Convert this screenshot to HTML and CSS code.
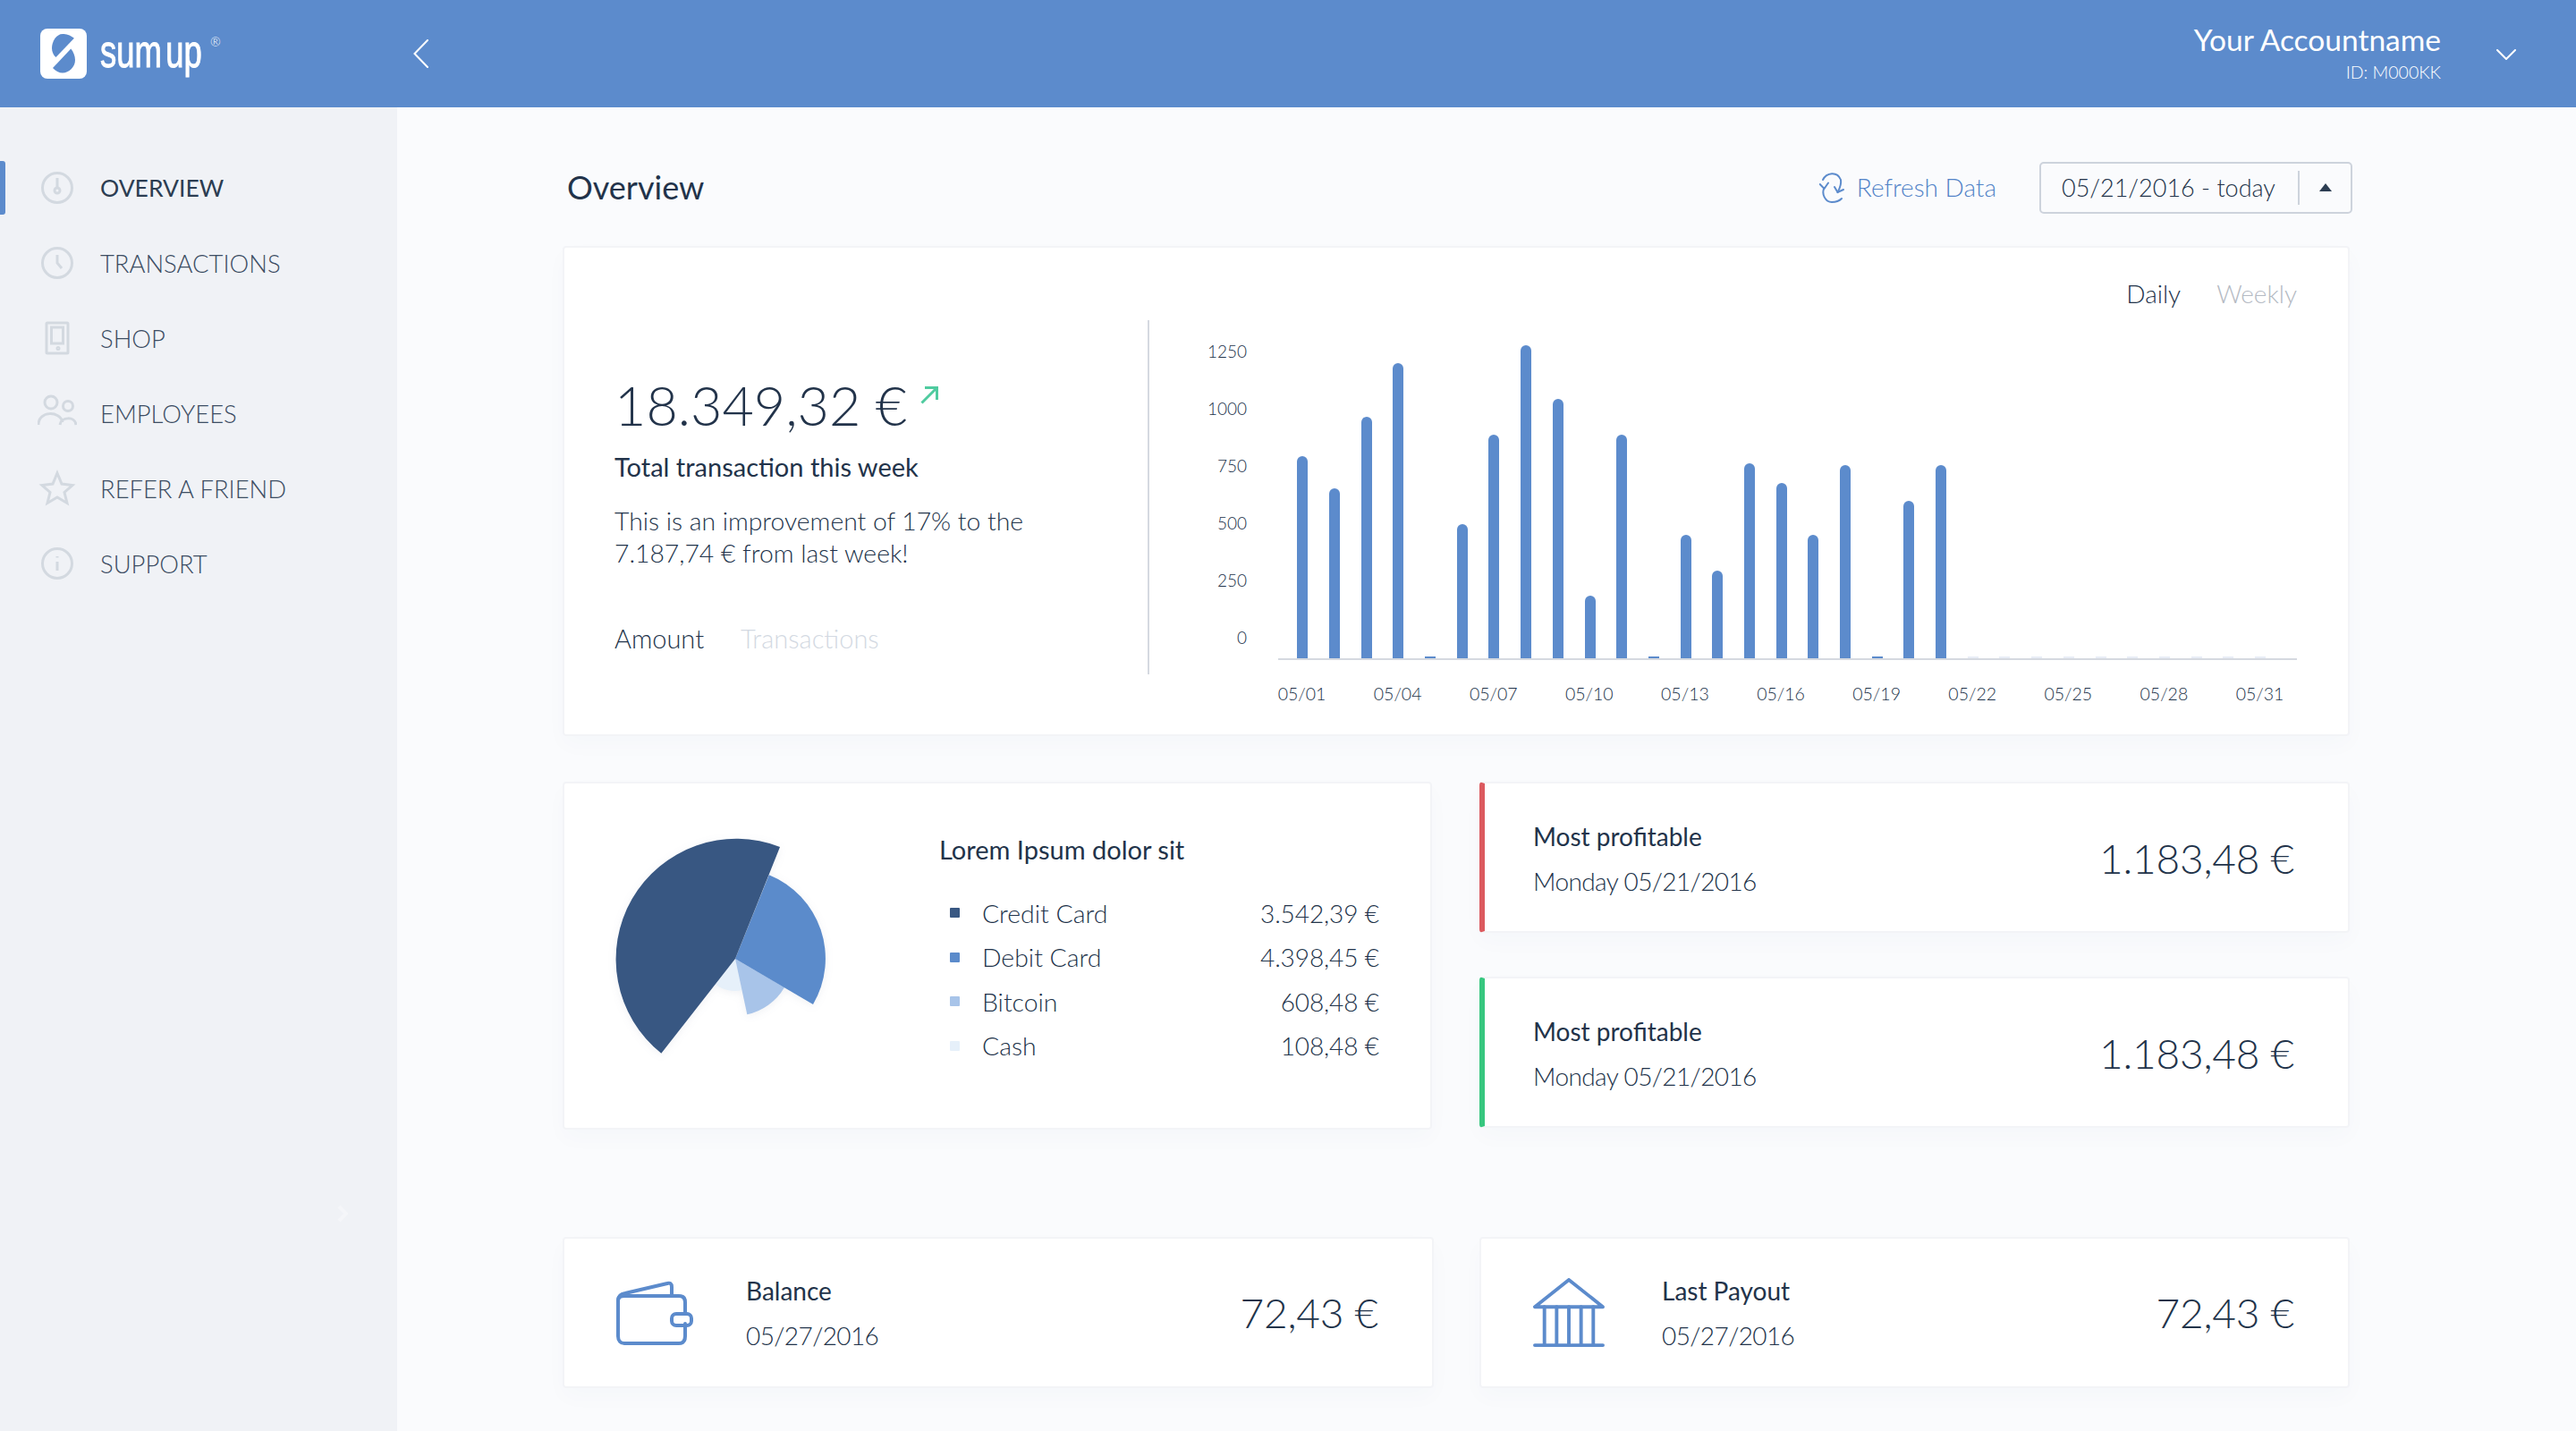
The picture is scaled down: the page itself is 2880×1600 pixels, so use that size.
FILE: index.html
```html
<!DOCTYPE html>
<html lang="en">
<head>
  <meta charset="UTF-8" />
  <title>SumUp Overview</title>
  <link rel="stylesheet" href="styles.css">
</head>
<body>

  <header class="topbar">
    <div class="brand">
      <svg class="brand-mark" viewBox="0 0 52 56">
        <rect width="52" height="56" rx="8" fill="#fff"/>
        <path fill="#5c8bcc" d="M37.9 10.700C33 7 29 6 25 6C18 6 13 14 13 22C13 26 15 30 17.500 32Z"/>
        <path fill="#5c8bcc" d="M34.300 22.500C37 26 39 31 39 35C39 43 32 49.500 25 49.500C21 49.500 17 47.500 14 44Z"/>
      </svg>
      <span class="brand-name">sum up</span>
      <span class="brand-reg">®</span>
    </div>
    <svg class="collapse" viewBox="0 0 17 32"><path d="M16 1L1.500 16L16 31"/></svg>
    <div class="account">
      <div class="account-name">Your Accountname</div>
      <div class="account-id">ID: M000KK</div>
    </div>
    <svg class="account-caret" viewBox="0 0 22 12"><path d="M1 1L11 11L21 1"/></svg>
  </header>

  <div class="layout">
    <aside class="sidebar">
      <nav>
        <a class="nav-item active">
          <svg class="nav-icon" viewBox="0 0 44 44"><circle cx="22" cy="22" r="16.500"/><path d="M22 11V22"/><circle cx="22" cy="25" r="3"/></svg>
          OVERVIEW
        </a>
        <a class="nav-item">
          <svg class="nav-icon" viewBox="0 0 44 44"><circle cx="22" cy="22" r="16.500"/><path d="M22 13V22L27 28"/></svg>
          TRANSACTIONS
        </a>
        <a class="nav-item">
          <svg class="nav-icon" viewBox="0 0 44 44"><rect x="10" y="5" width="24" height="34" rx="1"/><rect x="15.500" y="10" width="13" height="18"/><circle cx="23" cy="33.500" r="1" /></svg>
          SHOP
        </a>
        <a class="nav-item">
          <svg class="nav-icon" viewBox="0 0 44 44"><circle cx="15" cy="10" r="7"/><circle cx="34" cy="14" r="5.500"/><path d="M1 35C1 19 25 19 28 32"/><path d="M25 35C26 26 42 25 43 35"/></svg>
          EMPLOYEES
        </a>
        <a class="nav-item">
          <svg class="nav-icon" viewBox="0 0 44 44"><path d="M22 5L27 17L39 18.500L30 26.500L33 38.500L22 32L11 38.500L14 26.500L5 18.500L17 17Z"/></svg>
          REFER A FRIEND
        </a>
        <a class="nav-item">
          <svg class="nav-icon" viewBox="0 0 44 44"><circle cx="22" cy="22" r="16.500"/><path d="M22 20V30"/><path d="M22 14V15.500"/></svg>
          SUPPORT
        </a>
      </nav>
      <svg class="sidebar-toggle" viewBox="0 0 12 20"><path d="M2 2L10 10L2 18"/></svg>
    </aside>

    <main class="content">
      <div class="toolbar">
        <h1 class="page-title">Overview</h1>
        <a class="refresh">
          <svg class="refresh-icon" viewBox="12 12 28 36">
            <path d="M16 22C20 14 32 12 36 22C37 28 34 33 32.500 36"/><path d="M29 30L32.500 36L39 33"/>
            <path d="M17.500 31C14 38 19 47 26 47C30 47 34 46 37 43"/><path d="M12.700 27L17.500 32L22 25.500"/>
          </svg>
          Refresh Data
        </a>
        <div class="date-select">
          <span class="date-value">05/21/2016 - today</span>
          <span class="date-arrow"></span>
        </div>
      </div>

      <section class="card summary">
        <div class="summary-text">
          <div class="total">
            <span>18.349,32 €</span>
            <svg class="trend" viewBox="0 0 20 20"><path d="M1.500 18.500L18 2"/><path d="M5 1.500H18.500V15"/></svg>
          </div>
          <div class="total-label">Total transaction this week</div>
          <p class="total-note">This is an improvement of 17% to the<br>7.187,74 € from last week!</p>
          <div class="tabs">
            <span>Amount</span>
            <span class="tab-off">Transactions</span>
          </div>
        </div>

        <div class="summary-chart">
          <div class="period">
            <span>Daily</span>
            <span class="period-off">Weekly</span>
          </div>
          <div class="chart">
            <div class="y-axis">
              <span>1250</span><span>1000</span><span>750</span><span>500</span><span>250</span><span>0</span>
            </div>
            <div class="plot">
              <div class="slot"><i class="bar" style="height:226px"></i></div>
              <div class="slot"><i class="bar" style="height:190px"></i></div>
              <div class="slot"><i class="bar" style="height:270px"></i></div>
              <div class="slot"><i class="bar" style="height:330px"></i></div>
              <div class="slot"><i class="bar tiny" style="height:2px"></i></div>
              <div class="slot"><i class="bar" style="height:150px"></i></div>
              <div class="slot"><i class="bar" style="height:250px"></i></div>
              <div class="slot"><i class="bar" style="height:350px"></i></div>
              <div class="slot"><i class="bar" style="height:290px"></i></div>
              <div class="slot"><i class="bar" style="height:70px"></i></div>
              <div class="slot"><i class="bar" style="height:250px"></i></div>
              <div class="slot"><i class="bar tiny" style="height:2px"></i></div>
              <div class="slot"><i class="bar" style="height:138px"></i></div>
              <div class="slot"><i class="bar" style="height:98px"></i></div>
              <div class="slot"><i class="bar" style="height:218px"></i></div>
              <div class="slot"><i class="bar" style="height:196px"></i></div>
              <div class="slot"><i class="bar" style="height:138px"></i></div>
              <div class="slot"><i class="bar" style="height:216px"></i></div>
              <div class="slot"><i class="bar tiny" style="height:2px"></i></div>
              <div class="slot"><i class="bar" style="height:176px"></i></div>
              <div class="slot"><i class="bar" style="height:216px"></i></div>
              <div class="slot"><i class="bar empty"></i></div>
              <div class="slot"><i class="bar empty"></i></div>
              <div class="slot"><i class="bar empty"></i></div>
              <div class="slot"><i class="bar empty"></i></div>
              <div class="slot"><i class="bar empty"></i></div>
              <div class="slot"><i class="bar empty"></i></div>
              <div class="slot"><i class="bar empty"></i></div>
              <div class="slot"><i class="bar empty"></i></div>
              <div class="slot"><i class="bar empty"></i></div>
              <div class="slot"><i class="bar empty"></i></div>
            </div>
          </div>
          <div class="x-axis">
            <span>05/01</span><span>05/04</span><span>05/07</span><span>05/10</span><span>05/13</span><span>05/16</span>
            <span>05/19</span><span>05/22</span><span>05/25</span><span>05/28</span><span>05/31</span>
          </div>
        </div>
      </section>

      <div class="row-middle">
        <section class="card breakdown">
          <svg class="pie" viewBox="0 0 280 280">
            <path fill="#e6f0fa" d="M140 140L147.500 175A36 36 0 0 1 117.800 168.400Z"/>
            <path fill="#a8c4e9" d="M140 140L195 172A64 64 0 0 1 153.300 202.300Z"/>
            <path fill="#5b8bcb" d="M140 140L177.800 46.200A101 101 0 0 1 227 191Z"/>
            <path fill="#385782" d="M140 140L190 15A134.600 134.600 0 0 0 57.300 245.700Z"/>
          </svg>
          <div class="legend">
            <div class="legend-title">Lorem Ipsum dolor sit</div>
            <div class="legend-row"><i class="dot dot-credit"></i><span class="legend-name">Credit Card</span><span class="legend-value">3.542,39 €</span></div>
            <div class="legend-row"><i class="dot dot-debit"></i><span class="legend-name">Debit Card</span><span class="legend-value">4.398,45 €</span></div>
            <div class="legend-row"><i class="dot dot-bitcoin"></i><span class="legend-name">Bitcoin</span><span class="legend-value">608,48 €</span></div>
            <div class="legend-row"><i class="dot dot-cash"></i><span class="legend-name">Cash</span><span class="legend-value">108,48 €</span></div>
          </div>
        </section>

        <div class="stat-stack">
          <section class="card stat stat-red">
            <div class="stat-text">
              <div class="stat-title">Most profitable</div>
              <div class="stat-sub">Monday 05/21/2016</div>
            </div>
            <div class="stat-value">1.183,48 €</div>
          </section>
          <section class="card stat stat-green">
            <div class="stat-text">
              <div class="stat-title">Most profitable</div>
              <div class="stat-sub">Monday 05/21/2016</div>
            </div>
            <div class="stat-value">1.183,48 €</div>
          </section>
        </div>
      </div>

      <div class="row-bottom">
        <section class="card stat payout">
          <svg class="payout-icon" viewBox="0 0 86 72">
            <path d="M62 17V7C62 3 60 2 57 3L10 14C4 15 2 18 2 22V62C2 67 5 70 9 70H70C75 70 77 67 77 62V48"/>
            <path d="M2 22C2 18 5 17 9 17H70C75 17 77 20 77 24V37"/>
            <rect x="62" y="37" width="22" height="13" rx="5"/>
          </svg>
          <div class="stat-text">
            <div class="stat-title">Balance</div>
            <div class="stat-sub">05/27/2016</div>
          </div>
          <div class="stat-value">72,43 €</div>
        </section>
        <section class="card stat payout">
          <svg class="payout-icon bank" viewBox="0 0 82 80">
            <path d="M41 2L2 33H80Z"/>
            <path d="M13 33V77M27 33V77M41 33V77M55 33V77M69 33V77"/>
            <path d="M2 77H80"/>
          </svg>
          <div class="stat-text">
            <div class="stat-title">Last Payout</div>
            <div class="stat-sub">05/27/2016</div>
          </div>
          <div class="stat-value">72,43 €</div>
        </section>
      </div>
    </main>
  </div>

</body>
</html>
```

FILE: styles.css
```css
:root {
  --blue: #5c8bcc;
  --navy: #2c3d52;
  --text: #22334a;
  --muted: #d3d9e2;
  --line: #d5d9e0;
  --sidebar: #f0f2f6;
  --bg: #fafbfd;
}

* {
  box-sizing: border-box;
}

body {
  margin: 0;
  height: 1600px;
  overflow: hidden;
  background-color: var(--bg);
  color: var(--text);
  font-family: Lato, "Open Sans", sans-serif;
  font-weight: 300;
  font-size: 28px;
}

.topbar {
  display: flex;
  align-items: center;
  height: 120px;
  padding: 0 67px 0 45px;
  background-color: var(--blue);
  color: #fff;
}

.brand {
  display: flex;
  width: 417px;
  height: 56px;
}

.brand-mark {
  width: 52px;
  height: 56px;
}

.brand-name {
  width: 118px;
  margin-left: 15px;
  font-family: "Liberation Sans", sans-serif;
  font-size: 52px;
  line-height: 50px;
  word-spacing: -8px;
  white-space: nowrap;
  -webkit-text-stroke: 1px #fff;
  transform: scaleX(.7);
  transform-origin: left;
}

.brand-reg {
  font-size: 14px;
  line-height: 30px;
  margin-left: 5px;
}

.collapse {
  width: 17px;
  height: 32px;
}

.collapse path,
.account-caret path {
  fill: none;
  stroke: #fff;
  stroke-width: 2;
  stroke-linecap: round;
}

.account {
  margin-left: auto;
  text-align: right;
}

.account-name {
  font-size: 33.5px;
  font-weight: 400;
  line-height: 40px;
  margin-top: -2px;
}

.account-id {
  font-size: 19.5px;
  line-height: 26px;
  margin-top: 4px;
}

.account-caret {
  width: 22px;
  height: 12px;
  margin: 2px 0 0 62px;
}

.layout {
  display: flex;
  height: 1480px;
}

.sidebar {
  width: 444px;
  padding-top: 48px;
  background-color: var(--sidebar);
}

.nav-item {
  display: flex;
  align-items: center;
  gap: 26px;
  height: 84px;
  padding-left: 42px;
  font-size: 27.4px;
  color: #3c4d63;
}

.nav-item.active {
  position: relative;
  color: var(--navy);
  font-size: 26.5px;
  font-weight: 400;
}

.nav-item.active::before {
  content: "";
  position: absolute;
  left: 0;
  top: 12px;
  width: 6px;
  height: 60px;
  background-color: var(--blue);
  border-radius: 0 3px 3px 0;
}

.nav-icon {
  width: 44px;
  height: 44px;
  flex: none;
}

.nav-icon * {
  fill: none;
  stroke: #d3d9e0;
  stroke-width: 3;
}

.sidebar-toggle {
  display: block;
  width: 12px;
  height: 20px;
  margin: 675px 0 0 377px;
}

.sidebar-toggle path {
  fill: none;
  stroke: #f5f6f9;
  stroke-width: 4;
}

.content {
  flex: 1;
  padding: 0 253px 0 185px;
}

.toolbar {
  display: flex;
  align-items: center;
  height: 58px;
  margin: 61px -3px 36px 0;
  padding-left: 5px;
}

.page-title {
  margin: -2px auto 0 0;
  font-size: 36px;
  font-weight: 400;
}

.refresh {
  display: flex;
  align-items: center;
  gap: 14px;
  margin: -2px 48px 0 0;
  color: #5283c8;
  font-size: 28px;
}

.refresh-icon {
  width: 28px;
  height: 36px;
}

.refresh-icon path {
  fill: none;
  stroke: var(--blue);
  stroke-width: 2;
  stroke-linecap: round;
}

.date-select {
  display: flex;
  align-items: center;
  width: 350px;
  height: 58px;
  padding-left: 23px;
  border: 2px solid #cdd3dc;
  border-radius: 5px;
  font-size: 27px;
}

.date-value {
  width: 264px;
  margin-top: -2px;
}

.date-arrow {
  position: relative;
  width: 59px;
  height: 38px;
  border-left: 2px solid #cdd3dc;
}

.date-arrow::after {
  content: "";
  position: absolute;
  left: 22px;
  top: 14px;
  border-left: 7px solid transparent;
  border-right: 7px solid transparent;
  border-bottom: 9px solid var(--navy);
}

.card {
  background-color: #fff;
  border: 2px solid #f3f4f7;
  border-radius: 4px;
  box-shadow: 0 10px 24px rgba(60, 80, 120, .025);
}

.summary {
  display: flex;
  height: 548px;
}

.summary-text {
  width: 654px;
  height: 396px;
  margin-top: 81px;
  padding: 60px 0 0 56px;
  border-right: 2px solid var(--line);
}

.total {
  display: flex;
  font-size: 61px;
  line-height: 70px;
}

.trend {
  width: 20px;
  height: 20px;
  margin: 14px 0 0 15px;
}

.trend path {
  fill: none;
  stroke: #4fcb9f;
  stroke-width: 3;
}

.total-label {
  margin-top: 16px;
  font-size: 29px;
  font-weight: 400;
  line-height: 36px;
}

.total-note {
  margin: 24px 0 0;
  font-size: 28.3px;
  line-height: 36px;
}

.tabs {
  display: flex;
  gap: 41px;
  margin-top: 60px;
  font-size: 29px;
  line-height: 36px;
}

.tab-off {
  color: var(--muted);
}

.summary-chart {
  flex: 1;
  padding: 38px 0 0 61px;
}

.period {
  display: flex;
  justify-content: flex-end;
  gap: 40px;
  padding-right: 57px;
  line-height: 26px;
}

.period-off {
  color: #b4bac3;
}

.chart {
  display: flex;
  align-items: flex-start;
  margin-top: 22px;
}

.y-axis {
  display: flex;
  flex-direction: column;
  align-items: flex-end;
  width: 48px;
  margin: -2px 35px 0 0;
  font-size: 19px;
}

.y-axis span {
  height: 64px;
  line-height: 64px;
}

.plot {
  display: flex;
  align-items: flex-end;
  width: 1139px;
  height: 375px;
  padding-left: 9.5px;
  border-bottom: 2px solid var(--line);
}

.slot {
  display: flex;
  justify-content: center;
  width: 35.7px;
}

.bar {
  width: 12px;
  background-color: var(--blue);
  border-radius: 6px 6px 0 0;
}

.bar.tiny {
  border-radius: 0;
}

.bar.empty {
  height: 2px;
  border-radius: 0;
  background-color: #e8edf6;
}

.x-axis {
  display: flex;
  margin: 19px 0 0 56px;
  font-size: 19.5px;
  line-height: 24px;
}

.x-axis span {
  width: 107.1px;
  text-align: center;
}

.row-middle {
  display: grid;
  grid-template-columns: 972px 973px;
  gap: 53px;
  height: 389px;
  margin-top: 51px;
}

.breakdown {
  display: flex;
  padding: 0 57px 0 51px;
}

.pie {
  width: 280px;
  height: 280px;
  margin-top: 56px;
  filter: drop-shadow(0 2px 5px rgba(60, 80, 120, .08));
}

.legend {
  flex: 1;
  padding: 56px 0 0 88px;
}

.legend-title {
  font-size: 29px;
  font-weight: 400;
  line-height: 36px;
  margin-bottom: 28px;
}

.legend-row {
  display: flex;
  align-items: center;
  height: 49.500px;
}

.legend-name {
  margin-right: auto;
  font-size: 28.4px;
}

.legend-value {
  letter-spacing: -.1px;
}

.dot {
  width: 11px;
  height: 11px;
  margin: 0 25px 0 12px;
  border-radius: 1px;
}

.dot-credit { background-color: #385782; }
.dot-debit { background-color: #5b8bcb; }
.dot-bitcoin { background-color: #a8c4e9; }
.dot-cash { background-color: #e6f0fa; }

.stat-stack {
  display: flex;
  flex-direction: column;
  gap: 49px;
}

.stat {
  display: flex;
  align-items: center;
  height: 169px;
  padding: 2px 60px 0 58px;
}

.stat-red { border-left: 6px solid #dc5a5f; padding-left: 54px; }
.stat-green { border-left: 6px solid #37c77f; padding-left: 54px; }

.stat-title {
  font-weight: 400;
  line-height: 36px;
}

.stat-sub {
  margin-top: 14px;
  line-height: 36px;
  letter-spacing: -.6px;
}

.stat-value {
  margin-left: auto;
  font-size: 46px;
  letter-spacing: -.2px;
}

.row-bottom {
  display: grid;
  grid-template-columns: 974px 973px;
  gap: 51px;
  margin-top: 120px;
}

.payout {
  padding-top: 0;
}

.payout-icon {
  width: 86px;
  height: 72px;
  margin: 0 59px 0 0;
  flex: none;
}

.payout-icon * {
  fill: none;
  stroke: var(--blue);
  stroke-width: 4;
  stroke-linecap: round;
  stroke-linejoin: round;
}

.payout-icon.bank {
  width: 80px;
  height: 78px;
  margin-right: 64px;
}
```
